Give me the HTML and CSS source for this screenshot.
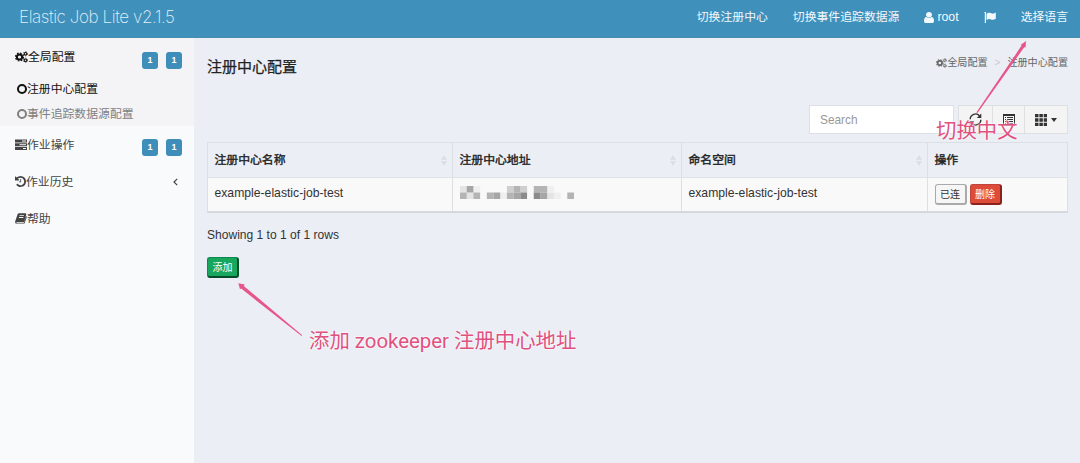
FILE: index.html
```html
<!DOCTYPE html>
<html lang="zh-CN">
<head>
<meta charset="utf-8">
<title>Elastic Job Lite</title>
<link rel="stylesheet" href="styles.css">
</head>
<body>
<svg class="defs" aria-hidden="true">
  <defs>
    <symbol id="cogs" viewBox="0 0 26 24">
      <g fill="none" stroke="currentColor">
        <circle cx="9" cy="12" r="5.2" stroke-width="4"/>
        <circle cx="9" cy="12" r="7.8" stroke-width="2.6" stroke-dasharray="3.4 2.73"/>
        <circle cx="21" cy="5.5" r="2.6" stroke-width="2.2"/>
        <circle cx="21" cy="5.5" r="4.2" stroke-width="1.6" stroke-dasharray="2.2 2.2"/>
        <circle cx="21" cy="18.5" r="2.6" stroke-width="2.2"/>
        <circle cx="21" cy="18.5" r="4.2" stroke-width="1.6" stroke-dasharray="2.2 2.2"/>
      </g>
    </symbol>
    <symbol id="sort" viewBox="0 0 7 12"><path d="M3.5 0 7 5H0zM0 7h7l-3.5 5z" fill="currentColor"/></symbol>
  </defs>
</svg>
<header class="navbar">
  <div class="logo">Elastic Job Lite v2.1.5</div>
  <nav class="nav">
    <span>切换注册中心</span>
    <span>切换事件追踪数据源</span>
    <span class="user"><svg viewBox="256 128 1280 1536" width="10" height="11" preserveAspectRatio="none"><path fill="currentColor" d="M1536 1399q0 109-62.500 187t-150.500 78h-854q-88 0-150.500-78t-62.500-187q0-85 8.500-160.500t31.500-152 58.500-131 94-89 134.500-34.500q131 128 313 128t313-128q76 0 134.500 34.500t94 89 58.500 131 31.500 152 8.500 160.500zm-256-887q0 159-112.500 271.500t-271.500 112.500-271.500-112.500-112.500-271.500 112.500-271.500 271.500-112.500 271.500 112.500 112.500 271.500z"/></svg><b>root</b></span>
    <svg class="flag" viewBox="0 0 12 11" width="12" height="11"><path fill="currentColor" d="M.3.500a1 1 0 0 1 1.900 0L2 1.300V11H.8V1.300zM2.600 1.700C5-.1 6.500.9 8 1.500c1.200.4 2.400-.2 3.800-.9v6.100C8 8.900 7.300 7 5.600 6.900c-1.100 0-2 .5-3 1z"/></svg>
    <span>选择语言</span>
  </nav>
</header>
<div class="page">
  <aside class="sidebar">
    <div class="group">
      <div class="item first"><svg width="13" height="12"><use href="#cogs"/></svg><span>全局配置</span><i class="badge">1</i><i class="badge">1</i></div>
      <div class="sub on"><i class="ring"></i>注册中心配置</div>
      <div class="sub"><i class="ring"></i>事件追踪数据源配置</div>
    </div>
    <div class="item"><svg viewBox="0 0 12 11" width="12" height="11"><path fill="currentColor" fill-rule="evenodd" d="M0 .5h12v3H0zm7 1v1h4v-1zM0 4.200h12v3H0zm4.500 1v1H11v-1zM0 7.900h12v3H0zm8 1v1h3v-1z"/></svg><span>作业操作</span><i class="badge">1</i><i class="badge">1</i></div>
    <div class="item"><svg viewBox="128 128 1536 1536" width="11" height="11"><path fill="currentColor" d="M1664 896q0 156-61 298t-164 245-245 164-298 61q-172 0-327-72.500t-264-204.500q-7-10-6.500-22.500t8.500-20.500l137-138q10-9 25-9 16 2 23 12 73 95 179 147t225 52q104 0 198.500-40.500t163.500-109.500 109.500-163.500 40.500-198.500-40.500-198.500-109.500-163.500-163.500-109.500-198.500-40.500q-98 0-188 35.500t-160 101.500l137 138q31 30 14 69-17 40-59 40h-448q-26 0-45-19t-19-45v-448q0-42 40-59 39-17 69 14l130 129q107-101 244.500-156.500t284.500-55.500q156 0 298 61t245 164 164 245 61 298zM870 560h110v448H690V890h180z"/></svg><span>作业历史</span><svg class="chev" viewBox="0 0 5 8" width="5" height="8"><path d="M4.200.8 1 4l3.200 3.200" fill="none" stroke="currentColor" stroke-width="1.200"/></svg></div>
    <div class="item"><svg viewBox="0 0 12 11" width="12" height="11"><path fill="currentColor" fill-rule="evenodd" d="M4 .2h6.600q1 .2.7 1.200L9.200 8.400q-.3.900-1.200.9H2q-.8.100-.8.600.2.500.8.500h6.700l2.400-7.500q.9.300.7 1.100L9.700 10q-.3 1-1.300 1H1.700Q.3 10.700.1 9.300L.3 8 2.700 1.100Q3.100.2 4 .2zm.7 2-.3.800h4.400l.3-.8zm-.6 1.900-.3.800h4.400l.3-.8z"/></svg><span>帮助</span></div>
  </aside>
  <main class="content">
    <div class="heading">
      <h1>注册中心配置</h1>
      <div class="crumbs"><svg width="11" height="10"><use href="#cogs"/></svg><span>全局配置</span><em>&gt;</em><span>注册中心配置</span></div>
    </div>
    <div class="tools">
      <div class="search">Search</div>
      <div class="btns">
        <div><svg viewBox="0 0 13 13" width="13" height="13"><g fill="none" stroke="currentColor" stroke-width="1.400"><path d="M1.200 6.300A5.300 5.300 0 0 1 10.500 2.800M11.800 6.700A5.300 5.300 0 0 1 2.500 10.200"/></g><path fill="currentColor" d="M12.300.5V5H7.800zM.7 12.500V8h4.500z"/></svg></div>
        <div><svg viewBox="0 0 12 12" width="12" height="12"><path fill="currentColor" fill-rule="evenodd" d="M0 0h12v12H0zm1 2v9h10V2z"/><path stroke="currentColor" d="M2 3.500h1M4 3.500h6M2 5.500h1M4 5.500h6M2 7.500h1M4 7.500h6M2 9.500h1M4 9.500h6"/></svg></div>
        <div><svg viewBox="0 0 11 11" width="12" height="12"><path fill="currentColor" d="M0 0h3.200v3H0zM4 0h3.200v3H4zM8 0h3v3H8zM0 4h3.200v3H0zM4 4h3.200v3H4zM8 4h3v3H8zM0 8h3.200v3H0zM4 8h3.200v3H4zM8 8h3v3H8z"/></svg><i class="caret"></i></div>
      </div>
    </div>
    <div class="table">
      <div class="th">注册中心名称<svg width="6" height="11"><use href="#sort"/></svg></div>
      <div class="th">注册中心地址<svg width="6" height="11"><use href="#sort"/></svg></div>
      <div class="th">命名空间<svg width="6" height="11"><use href="#sort"/></svg></div>
      <div class="th">操作</div>
      <div class="td">example-elastic-job-test</div>
      <div class="td"><svg class="mosaic" viewBox="0 0 17 2" width="114" height="13" preserveAspectRatio="none">
        <path fill="#e4e4e4" d="M0 0h1v1H0zM1 1h1v1H1zM13 1h1v1h-1z"/>
        <path fill="#efefef" d="M2 0h1v1H2zM6 1h1v1H6zM14 1h1v1h-1zM13 0h1v1h-1z"/>
        <path fill="#cfcfcf" d="M7 0h1v1H7zM9 0h1v1H9z"/>
        <path fill="#b4b4b4" d="M0 1h1v1H0zM2 1h1v1H2zM4 1h1v1H4zM7 1h1v1H7zM8 0h1v1H8zM11 0h2v1h-2zM16 1h1v1h-1z"/>
        <path fill="#a6a6a6" d="M1 0h1v1H1zM5 1h1v1H5zM8 1h1v1H8zM12 1h1v1h-1z"/>
        <path fill="#8c8c8c" d="M9 1h1v1H9zM11 1h1v1h-1z"/>
      </svg></div>
      <div class="td">example-elastic-job-test</div>
      <div class="td"><span class="btn">已连</span><span class="btn red">删除</span></div>
    </div>
    <p class="info">Showing 1 to 1 of 1 rows</p>
    <span class="btn green">添加</span>
  </main>
</div>
<svg class="arrows" width="1080" height="463" viewBox="0 0 1080 463">
  <path fill="#e7568a" d="M976.300 112.400 1021.600 45.600 1020.600 44.900 1026 41 1025.600 47.600 1024.200 47.200 977.500 113.100zM301.600 336 241.200 288.600 240 289.200 238.300 283.300 244.800 284.500 243.800 285.900 302.200 335.200z"/>
</svg>
<div class="note note-lang">切换中文</div>
<div class="note note-add">添加 zookeeper 注册中心地址</div>
</body>
</html>
```
FILE: styles.css
```css
* { box-sizing: border-box; }
body { margin: 0; width: 1080px; height: 463px; overflow: hidden; position: relative; background: #ebeef5; color: #333; font: 11.850px/16px "Liberation Sans", "Noto Sans CJK SC", sans-serif; }
svg { display: block; flex: none; }
i, em { font-style: normal; }
.defs { position: absolute; width: 0; height: 0; }

.navbar { height: 38px; display: flex; justify-content: space-between; padding: 0 12px 3px 19px; align-items: center; background: #4090bc; border-bottom: 1px solid #4a8cb0; color: #f2f9fd; }
.logo { font: 200 17px/20px Inter, Roboto, sans-serif; letter-spacing: -.4px; color: #e2f1f9; }
.nav { display: flex; align-items: center; }
.nav > * + * { margin-left: 25px; }
.user { display: flex; align-items: center; gap: 3px; }
.user b { font-weight: 400; font-size: 12.300px; }

.page { display: flex; height: 425px; }
.sidebar { width: 194px; background: #f9fafc; color: #444; }
.group { height: 88px; background: #f4f4f6; color: #111; }
.item { display: flex; align-items: center; height: 37px; padding: 0 12px 0 15px; }
.group .item { height: 38px; }
.item > span { margin-right: auto; }
.badge { width: 16px; height: 17px; margin: 6px 0 0 8px; border-radius: 3px; background: #3f8eb9; color: #fff; font: bold 9px/17px "Liberation Sans", sans-serif; text-align: center; }
.chev { margin-right: 4px; }
.sub { display: flex; align-items: center; height: 25px; padding-left: 17px; color: #808080; }
.on { color: #111; }
.ring { width: 10px; height: 10px; border: 1.500px solid; border-width: 2px; border-radius: 50%; }

.content { width: 886px; padding: 0 12px 0 13px; }
.heading { height: 67px; padding-top: 16px; display: flex; justify-content: space-between; }
h1 { margin: 3px 0 0; font-size: 15px; line-height: 20px; font-weight: 400; color: #222; -webkit-text-stroke: .25px; }
.crumbs { display: flex; align-items: center; height: 18px; font-size: 10.100px; color: #666; }
.crumbs em { margin: 0 7px; color: #ccc; font-size: 10px; }
.tools { display: flex; justify-content: flex-end; gap: 4px; height: 29px; }
.search { width: 145px; padding-left: 10px; border: 1px solid #dcdfe5; background: #fff; color: #999; line-height: 28px; }
.btns { display: flex; width: 110px; border: 1px solid #dddfe2; background: #f4f4f4; }
.btns div { width: 33px; display: flex; align-items: center; justify-content: center; gap: 4px; color: #333; }
.btns div + div { border-left: 1px solid #dddfe2; }
.btns div:last-child { width: 43px; }
.caret { border: 3.500px solid transparent; border-width: 4px 3.500px 0; border-top-color: #333; }

.table { display: grid; grid-template-columns: 244px 229px 246px 140px; grid-template-rows: 35px 33px; margin-top: 8px; border: 1px solid #dcdfe4; border-bottom: 2px solid #d5d8dd; height: 71px; }
.th { display: flex; align-items: center; justify-content: space-between; padding: 0 5px 0 6.500px; color: #222; border-bottom: 1px solid #dfe2e6; -webkit-text-stroke: .4px; }
.th svg { color: #dadde2; -webkit-text-stroke: 0; }
.td { display: flex; align-items: center; padding: 0 6.500px 3px; background: #f9f9f9; font-size: 12.200px; }
.th:not(:nth-child(4n+1)), .td:not(:nth-child(4n+1)) { border-left: 1px solid #dddfe3; }
.mosaic { margin-top: -1px; }
.btn { display: inline-block; width: 32px; height: 21px; border: 1px solid #aaa; border-width: 1px 2px 2px 1px; border-radius: 3px; background: #f6f6f6; font-size: 10px; line-height: 19px; text-align: center; }
.td .btn { margin-top: 3px; }
.td .red { margin-left: 3px; background: #dd4b39; border-color: #c0443b #8b211c #8b211c #c0443b; color: #fff; }
.green { background: #17a65d; border-color: #0c8a4b #064d2b #064d2b #0c8a4b; color: #fff; }
.info { margin: 14px 0; height: 16px; font-size: 12.050px; }

/* Annotations drawn over the page */
.arrows, .note { position: absolute; }
.arrows { left: 0; top: 0; }
.note { color: #e0517f; font: 20.400px/26px Inter, "Noto Sans CJK SC", sans-serif; white-space: nowrap; text-shadow: 0 0 2px #fff, 0 0 2px #fff; }
.note-lang { left: 936px; top: 118px; }
.note-add { left: 309px; top: 328px; font-family: Roboto, "Noto Sans CJK SC", sans-serif; }
```
